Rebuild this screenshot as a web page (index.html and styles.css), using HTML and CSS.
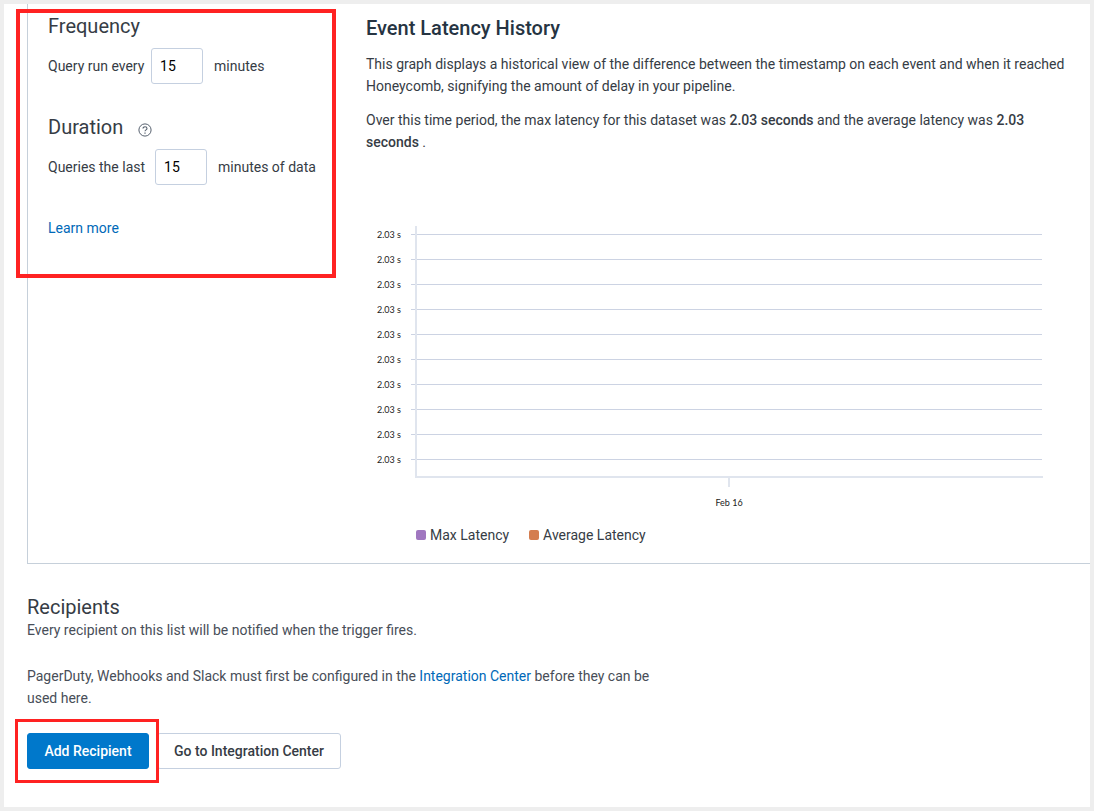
FILE: index.html
```html
<!DOCTYPE html>
<html lang="en">
<head>
<meta charset="utf-8">
<title>Trigger settings</title>
<link rel="stylesheet" href="styles.css">
</head>
<body>
<main class="page">
  <section class="panel">
    <div class="settings">
      <h2 class="heading">Frequency</h2>
      <div class="field">
        <span class="label-frequency">Query run every</span>
        <input class="number" type="text" value="15" aria-label="Frequency">
        <span class="unit">minutes</span>
      </div>
      <h2 class="heading heading-duration">Duration
        <svg class="help" width="14" height="14" viewBox="0 0 14 14" fill="none" stroke="#56606e">
          <circle cx="7" cy="7" r="6.1"/>
          <path d="M5 5.6C5 4.4 5.9 3.8 7 3.8s2 .7 2 1.7c0 1.3-2 1.4-2 2.8" stroke-width="1.1"/>
          <path d="M7 9.5v1.2" stroke-width="1.2"/>
        </svg>
      </h2>
      <div class="field">
        <span class="label-duration">Queries the last</span>
        <input class="number" type="text" value="15" aria-label="Duration">
        <span class="unit">minutes of data</span>
      </div>
      <a class="link learn">Learn more</a>
    </div>
    <div class="latency">
      <h2 class="title">Event Latency History</h2>
      <p class="text">This graph displays a historical view of the difference between the timestamp on each event and when it reached Honeycomb, signifying the amount of delay in your pipeline.</p>
      <p class="text">Over this time period, the max latency for this dataset was <b>2.03 seconds</b> and the average latency was <b>2.03 seconds</b> .</p>
      <svg class="chart" width="690" height="300" viewBox="0 0 690 300">
        <path class="grid" d="M45 14.5H676M45 39.5H676M45 64.5H676M45 89.5H676M45 114.5H676M45 139.5H676M45 164.5H676M45 189.5H676M45 214.5H676M45 239.5H676"/>
        <path class="axis" d="M50 6V257H677M363 257V267"/>
        <g class="tick" text-anchor="end">
          <text x="35" y="18">2.03 s</text>
          <text x="35" y="43">2.03 s</text>
          <text x="35" y="68">2.03 s</text>
          <text x="35" y="93">2.03 s</text>
          <text x="35" y="118">2.03 s</text>
          <text x="35" y="143">2.03 s</text>
          <text x="35" y="168">2.03 s</text>
          <text x="35" y="193">2.03 s</text>
          <text x="35" y="218">2.03 s</text>
          <text x="35" y="243">2.03 s</text>
        </g>
        <text class="tick" text-anchor="middle" x="363" y="286">Feb 16</text>
      </svg>
      <div class="legend">
        <span class="key"><i class="swatch swatch-max"></i>Max Latency</span>
        <span class="key"><i class="swatch swatch-average"></i>Average Latency</span>
      </div>
    </div>
  </section>
  <section class="recipients">
    <h2 class="heading">Recipients</h2>
    <p class="note">Every recipient on this list will be notified when the trigger fires.</p>
    <p class="note note-setup">PagerDuty, Webhooks and Slack must first be configured in the <a class="link">Integration Center</a> before they can be used here.</p>
    <div class="actions">
      <button class="button primary">Add Recipient</button>
      <button class="button secondary">Go to Integration Center</button>
    </div>
  </section>
  <div class="callout callout-settings"></div>
  <div class="callout callout-add"></div>
</main>
</body>
</html>
```
FILE: styles.css
```css
* { box-sizing: border-box; }
body {
  margin: 0;
  font: 14px/22px Roboto, sans-serif;
  color: #363c45;
}
.page {
  position: relative;
  height: 811px;
  border: 4px solid #eee;
  background: #fff;
  padding-left: 23px;
  overflow: hidden;
}
h2, p { margin: 0; }
.panel {
  display: flex;
  height: 560px;
  border-left: 1px solid #c6d0da;
  border-bottom: 1px solid #c6d0da;
}
.settings {
  width: 338px;
  flex: none;
  padding: 10px 0 0 20px;
}
.heading {
  font-size: 20px;
  line-height: 24px;
  font-weight: 400;
}
.field {
  display: flex;
  align-items: center;
  margin-top: 10px;
  height: 36px;
  white-space: nowrap;
}
.label-frequency { width: 103px; }
.label-duration { width: 107px; }
.number {
  width: 52px;
  height: 36px;
  border: 1px solid #c5d0e0;
  border-radius: 3px;
  padding: 0 8px;
  font: 14px Roboto, sans-serif;
  letter-spacing: .2px;
  color: #000;
}
.unit { margin-left: 11px; }
.heading-duration {
  display: flex;
  align-items: center;
  gap: 15px;
  margin-top: 31px;
}
.help { margin-top: 6px; }
.link { color: #0069b8; }
.learn {
  display: inline-block;
  margin-top: 32px;
}
.latency {
  flex: 1;
  padding: 12px 20px 0 0;
}
.title {
  font-size: 20px;
  line-height: 24px;
  font-weight: 500;
  color: #263442;
  margin-bottom: 13px;
}
.text { margin-bottom: 12px; }
.text b { font-weight: 500; }
.chart {
  display: block;
  margin-top: 67px;
}
.grid { stroke: #ccd3e3; fill: none; }
.axis { stroke: #e0e5ee; stroke-width: 2; fill: none; }
.tick { font: 9px Lato, sans-serif; fill: #222; }
.legend {
  display: flex;
  gap: 20px;
  margin: 4px 0 0 50px;
}
.key {
  display: flex;
  align-items: center;
  gap: 4px;
}
.swatch {
  width: 10px;
  height: 10px;
  border-radius: 2px;
}
.swatch-max { background: #a077c0; }
.swatch-average { background: #d47d50; }
.recipients { padding-top: 31px; }
.note {
  width: 640px;
  color: #484e58;
}
.note-setup { margin-top: 24px; }
.actions {
  display: flex;
  gap: 8px;
  margin-top: 24px;
}
.button {
  height: 36px;
  border: 1px solid #c5d0e0;
  border-radius: 3px;
  font: 500 14px Roboto, sans-serif;
  padding: 0;
}
.primary {
  width: 122px;
  background: #0078cb;
  border-color: #0078cb;
  color: #fff;
}
.secondary {
  width: 184px;
  background: #fff;
  color: #363c45;
}
.callout {
  position: absolute;
  border: 4px solid #ff2222;
}
.callout-settings {
  left: 12px;
  top: 5px;
  width: 320px;
  height: 269px;
}
.callout-add {
  left: 11px;
  top: 715px;
  width: 144px;
  height: 64px;
  border-width: 3px;
}
```
